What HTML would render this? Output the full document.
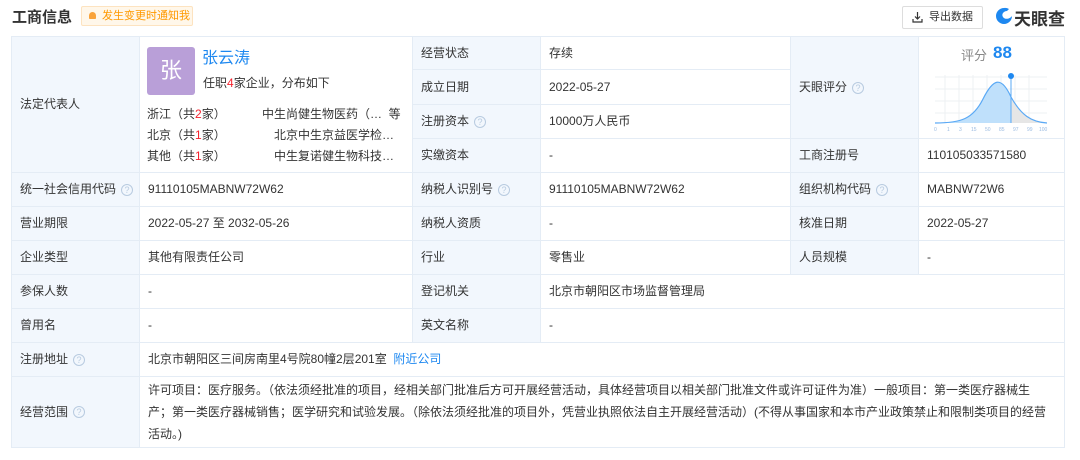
<!DOCTYPE html>
<html><head><meta charset="utf-8"><style>
*{margin:0;padding:0;box-sizing:border-box}
body{width:1080px;height:460px;background:#fff;font-family:"Liberation Sans","Noto Sans CJK SC",sans-serif;font-size:12px;color:#333;position:relative;overflow:hidden}
.a{position:absolute}
.c{position:absolute;border-right:1px solid #e4ecf5;border-bottom:1px solid #e4ecf5;display:flex;align-items:center;padding-left:8px;line-height:19px}
.l{background:#f2f7fd}
.q{display:inline-block;width:12px;height:12px;border:1px solid #b8cbe0;border-radius:50%;font-size:9px;line-height:10px;text-align:center;color:#b8cbe0;margin-left:5px}
.r{color:#f5222d}
</style></head><body>
<div class="a" style="left:12px;top:6px;font-size:15px;font-weight:bold;color:#333">工商信息</div>
<div class="a" style="left:81px;top:6px;width:112px;height:20px;border:1px solid #fde3c0;background:#fff7ea;border-radius:2px;color:#f90;font-size:11px;line-height:18px;padding-left:20px">
<span class="a" style="left:7px;top:5px;width:7px;height:7px;background:#f9a33a;border-radius:4px 4px 1px 1px"></span>发生变更时通知我</div>
<div class="a" style="left:902px;top:6px;width:81px;height:23px;border:1px solid #ddd;border-radius:2px;font-size:11px;line-height:21px;padding-left:26px">导出数据
<svg class="a" style="left:9px;top:5px" width="11" height="11" viewBox="0 0 11 11"><path d="M5.5 0v7M3 4.5l2.5 2.5 2.5-2.5M1 7v3h9V7" fill="none" stroke="#333" stroke-width="1.2"/></svg></div>
<svg class="a" style="left:995px;top:7px" width="18" height="18" viewBox="0 0 18 18"><path d="M9 1a8 8 0 1 0 8 8c-2 3-7 4-9 1s1-6 4-6l2-2A8 8 0 0 0 9 1z" fill="#1e88f0"/></svg>
<div class="a" style="left:1014px;top:5px;font-size:17px;font-weight:bold;color:#333">天眼查</div>

<div class="a" style="left:11px;top:36px;width:1054px;height:412px;border-left:1px solid #e4ecf5;border-top:1px solid #e4ecf5"></div>
<!-- top block -->
<div class="c l" style="left:12px;top:37px;width:128px;height:136px">法定代表人</div>
<div class="c" style="left:140px;top:37px;width:273px;height:136px;display:block;padding:0">
<div class="a" style="left:7px;top:10px;width:48px;height:48px;background:#b99fd8;border-radius:3px;color:#fff;font-size:22px;text-align:center;line-height:48px">张</div>
<div class="a" style="left:62px;top:12px;font-size:16px;color:#1e88f0">张云涛</div>
<div class="a" style="left:63px;top:37px">任职<span class="r">4</span>家企业，分布如下</div>
<div class="a" style="left:7px;top:68px">浙江（共<span class="r">2</span>家）</div><div class="a" style="left:122px;top:68px">中生尚健生物医药（…&nbsp;&nbsp;等</div>
<div class="a" style="left:7px;top:89px">北京（共<span class="r">1</span>家）</div><div class="a" style="left:134px;top:89px">北京中生京益医学检…</div>
<div class="a" style="left:7px;top:110px">其他（共<span class="r">1</span>家）</div><div class="a" style="left:134px;top:110px">中生复诺健生物科技…</div>
</div>
<div class="c l" style="left:413px;top:37px;width:128px;height:33px">经营状态</div>
<div class="c" style="left:541px;top:37px;width:250px;height:33px">存续</div>
<div class="c l" style="left:413px;top:70px;width:128px;height:35px">成立日期</div>
<div class="c" style="left:541px;top:70px;width:250px;height:35px">2022-05-27</div>
<div class="c l" style="left:413px;top:105px;width:128px;height:34px">注册资本<span class="q">?</span></div>
<div class="c" style="left:541px;top:105px;width:250px;height:34px">10000万人民币</div>
<div class="c l" style="left:413px;top:139px;width:128px;height:34px">实缴资本</div>
<div class="c" style="left:541px;top:139px;width:250px;height:34px">-</div>
<div class="c l" style="left:791px;top:37px;width:128px;height:102px">天眼评分<span class="q">?</span></div>
<div class="c" style="left:919px;top:37px;width:146px;height:102px;display:block;padding:0">
<div class="a" style="left:42px;top:9px;font-size:13px;color:#888">评分</div>
<div class="a" style="left:74px;top:6px;font-size:17px;font-weight:bold;color:#1e88f0">88</div>
<svg class="a" style="left:12px;top:30px" width="122" height="66" viewBox="0 0 122 66">
<g stroke="#eef0f3" stroke-width="1"><path d="M4 10h112M4 22h112M4 34h112M4 46h112M14 8v48M28 8v48M42 8v48M56 8v48M70 8v48M84 8v48M98 8v48"/></g>
<path d="M4 56C30 56 42 52 52 32S70 8 80 30V56Z" fill="#bfe0fb"/>
<path d="M80 30C90 48 100 55 116 56H80Z" fill="#e6e6e6"/>
<path d="M4 56C30 56 42 52 52 32S70 8 80 30C90 48 100 55 116 56" fill="none" stroke="#5aa9f5" stroke-width="1.2"/>
<path d="M80 10V56" stroke="#5aa9f5"/><circle cx="80" cy="9" r="3" fill="#1e88f0"/>
<text y="64" font-size="5" fill="#9bbbe0" font-family="Liberation Sans"><tspan x="3">0</tspan><tspan x="16">1</tspan><tspan x="28">3</tspan><tspan x="40">15</tspan><tspan x="54">50</tspan><tspan x="68">85</tspan><tspan x="82">97</tspan><tspan x="96">99</tspan><tspan x="108">100</tspan></text>
</svg></div>
<div class="c l" style="left:791px;top:139px;width:128px;height:34px">工商注册号</div>
<div class="c" style="left:919px;top:139px;width:146px;height:34px">110105033571580</div>
<!-- rows -->
<div class="c l" style="left:12px;top:173px;width:128px;height:34px">统一社会信用代码<span class="q">?</span></div>
<div class="c" style="left:140px;top:173px;width:273px;height:34px">91110105MABNW72W62</div>
<div class="c l" style="left:413px;top:173px;width:128px;height:34px">纳税人识别号<span class="q">?</span></div>
<div class="c" style="left:541px;top:173px;width:250px;height:34px">91110105MABNW72W62</div>
<div class="c l" style="left:791px;top:173px;width:128px;height:34px">组织机构代码<span class="q">?</span></div>
<div class="c" style="left:919px;top:173px;width:146px;height:34px">MABNW72W6</div>

<div class="c l" style="left:12px;top:207px;width:128px;height:34px">营业期限</div>
<div class="c" style="left:140px;top:207px;width:273px;height:34px">2022-05-27 至 2032-05-26</div>
<div class="c l" style="left:413px;top:207px;width:128px;height:34px">纳税人资质</div>
<div class="c" style="left:541px;top:207px;width:250px;height:34px">-</div>
<div class="c l" style="left:791px;top:207px;width:128px;height:34px">核准日期</div>
<div class="c" style="left:919px;top:207px;width:146px;height:34px">2022-05-27</div>

<div class="c l" style="left:12px;top:241px;width:128px;height:34px">企业类型</div>
<div class="c" style="left:140px;top:241px;width:273px;height:34px">其他有限责任公司</div>
<div class="c l" style="left:413px;top:241px;width:128px;height:34px">行业</div>
<div class="c" style="left:541px;top:241px;width:250px;height:34px">零售业</div>
<div class="c l" style="left:791px;top:241px;width:128px;height:34px">人员规模</div>
<div class="c" style="left:919px;top:241px;width:146px;height:34px">-</div>

<div class="c l" style="left:12px;top:275px;width:128px;height:34px">参保人数</div>
<div class="c" style="left:140px;top:275px;width:273px;height:34px">-</div>
<div class="c l" style="left:413px;top:275px;width:128px;height:34px">登记机关</div>
<div class="c" style="left:541px;top:275px;width:524px;height:34px">北京市朝阳区市场监督管理局</div>

<div class="c l" style="left:12px;top:309px;width:128px;height:34px">曾用名</div>
<div class="c" style="left:140px;top:309px;width:273px;height:34px">-</div>
<div class="c l" style="left:413px;top:309px;width:128px;height:34px">英文名称</div>
<div class="c" style="left:541px;top:309px;width:524px;height:34px">-</div>

<div class="c l" style="left:12px;top:343px;width:128px;height:34px">注册地址<span class="q">?</span></div>
<div class="c" style="left:140px;top:343px;width:925px;height:34px">北京市朝阳区三间房南里4号院80幢2层201室&nbsp;&nbsp;<span style="color:#1e88f0">附近公司</span></div>

<div class="c l" style="left:12px;top:377px;width:128px;height:71px">经营范围<span class="q">?</span></div>
<div class="c" style="left:140px;top:377px;width:925px;height:71px;line-height:22px;padding-right:12px">许可项目：医疗服务。（依法须经批准的项目，经相关部门批准后方可开展经营活动，具体经营项目以相关部门批准文件或许可证件为准）一般项目：第一类医疗器械生产；第一类医疗器械销售；医学研究和试验发展。（除依法须经批准的项目外，凭营业执照依法自主开展经营活动）(不得从事国家和本市产业政策禁止和限制类项目的经营活动。)</div>
</body></html>
